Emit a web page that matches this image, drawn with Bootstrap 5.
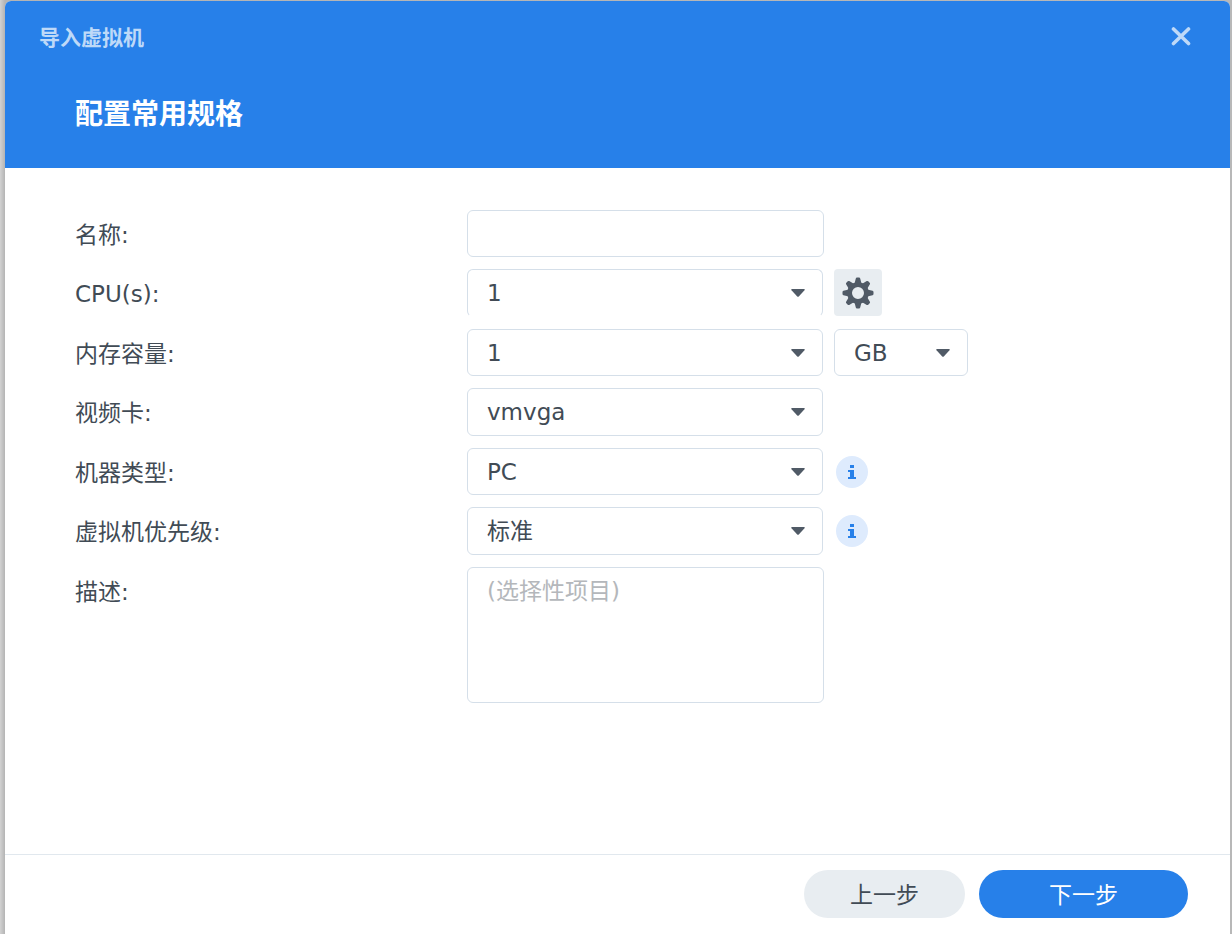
<!DOCTYPE html>
<html lang="zh-CN">
<head>
<meta charset="utf-8">
<meta name="viewport" content="width=device-width, initial-scale=1">
<title>导入虚拟机</title>
<link href="https://cdn.jsdelivr.net/npm/bootstrap@5.3.0/dist/css/bootstrap.min.css" rel="stylesheet">
<style>
  body {
    font: 23px/32px "DejaVu Sans", "Noto Sans CJK SC", sans-serif;
    color: #414b55;
    background: linear-gradient(90deg, #d2d2d2, #b4b4b4 5px, #b8b8b8);
    padding: 1px 2px 0 5px;
  }
  .wizard { min-height: calc(100vh - 1px); border-radius: 6px 6px 0 0; overflow: hidden; background: #fff; }
  .wizard-head { background: #2780e9; height: 167px; padding: 19px 33px 0 34px; }
  .wizard-title { font-size: 21px; line-height: 32px; font-weight: 700; color: #bed9f8; padding-top: 2px; }
  .wizard-close { width: 32px; height: 32px; color: #bed9f8; }
  .wizard-step { font-size: 28px; line-height: 40px; font-weight: 700; padding: 41px 36px 0; }
  .wizard-form { padding: 42px 70px; gap: 12px; }
  .field-row { min-height: 48px; gap: 11px; }
  .field-row:nth-child(odd) { min-height: 47px; }
  .field-label { width: 392px; margin-right: -11px; padding-top: 9px; }
  .form-control, .form-select {
    font-size: 23px; line-height: 32px; color: #414b55;
    border: 1px solid #d5dfe9; border-radius: 6px; padding: 6px 19px; width: 356px;
  }
  .form-control { width: 357px; padding-top: 7px; }
  .form-control::placeholder { color: #b4b7bb; opacity: 1; }
  .form-select {
    background-image: url("data:image/svg+xml,%3Csvg xmlns='http://www.w3.org/2000/svg' viewBox='0 0 14 8'%3E%3Cpath d='M1 0h12q1.5 0 .5 1.2L8 7.3q-1 1-2 0L.5 1.2Q-.5 0 1 0z' fill='%23505a66'/%3E%3C/svg%3E");
    background-size: 14px 8px; background-position: right 17px center;
  }
  .unit-select { width: 134px; }
  .cpu-select { border-bottom-color: transparent; }
  .note-box { height: 136px; resize: none; }
  .gear-btn { width: 48px; height: 47px; background: #e8edf1; border-radius: 4px; color: #505a66; }
  .info-btn { width: 32px; height: 32px; margin-left: 2px; background: #deebfd; color: #2780e9; }
  .wizard-foot { border-top: 1px solid #e1e8ee; padding: 15px 42px 16px; gap: 14px; }
  .step-btn { height: 48px; font-size: 23px; line-height: 32px; border: 0; padding: 2px 0 0; }
  .prev-btn { width: 161px; background: #e8edf1; color: #414b55; }
  .next-btn { width: 209px; background: #2780e9; color: #fff; }
</style>
</head>
<body>
<main class="wizard d-flex flex-column">
  <header class="wizard-head text-white">
    <div class="d-flex justify-content-between align-items-start">
      <h1 class="wizard-title mb-0">导入虚拟机</h1>
      <button type="button" class="wizard-close btn border-0 p-0 d-flex align-items-center justify-content-center" aria-label="关闭">
        <svg width="20" height="20" viewBox="0 0 20 20" fill="none" stroke="currentColor" stroke-width="3.600" stroke-linecap="round"><path d="M2.500 3l15 14.500M17.500 3l-15 14.500"/></svg>
      </button>
    </div>
    <h2 class="wizard-step mb-0">配置常用规格</h2>
  </header>

  <form class="wizard-form d-flex flex-column flex-grow-1">
    <div class="field-row d-flex">
      <label class="field-label flex-shrink-0" for="vm-name">名称:</label>
      <input class="form-control" id="vm-name" type="text">
    </div>
    <div class="field-row d-flex">
      <label class="field-label flex-shrink-0" for="vm-cpu">CPU(s):</label>
      <select class="form-select cpu-select" id="vm-cpu"><option>1</option></select>
      <button type="button" class="gear-btn btn border-0 p-0 d-flex align-items-center justify-content-center" aria-label="CPU 设置">
        <svg width="32" height="32" viewBox="-16 -16 32 32" fill="currentColor">
          <defs><path id="tooth" d="M-3.600-9L-2.200-14.600Q-2-15.500-1-15.500H1Q2-15.500 2.200-14.600L3.600-9z"/></defs>
          <path fill-rule="evenodd" d="M0-10.800A10.800 10.800 0 1 1 0 10.800A10.800 10.800 0 1 1 0-10.800zM0-6A6 6 0 1 0 0 6A6 6 0 1 0 0-6z"/>
          <use href="#tooth"/><use href="#tooth" transform="rotate(45)"/><use href="#tooth" transform="rotate(90)"/><use href="#tooth" transform="rotate(135)"/>
          <use href="#tooth" transform="rotate(180)"/><use href="#tooth" transform="rotate(225)"/><use href="#tooth" transform="rotate(270)"/><use href="#tooth" transform="rotate(315)"/>
        </svg>
      </button>
    </div>
    <div class="field-row d-flex">
      <label class="field-label flex-shrink-0" for="vm-memory">内存容量:</label>
      <select class="form-select" id="vm-memory"><option>1</option></select>
      <select class="form-select unit-select" aria-label="内存单位"><option>GB</option></select>
    </div>
    <div class="field-row d-flex">
      <label class="field-label flex-shrink-0" for="vm-video">视频卡:</label>
      <select class="form-select" id="vm-video"><option>vmvga</option></select>
    </div>
    <div class="field-row d-flex">
      <label class="field-label flex-shrink-0" for="vm-machine">机器类型:</label>
      <select class="form-select" id="vm-machine"><option>PC</option></select>
      <button type="button" class="info-btn btn border-0 rounded-circle p-0 d-flex align-items-center justify-content-center align-self-center" aria-label="机器类型说明">
        <svg width="8" height="14" viewBox="0 0 8 14" fill="currentColor"><path d="M2 0h4v3H2zM0 5h6v7h2v2H0v-2h2V7H0z"/></svg>
      </button>
    </div>
    <div class="field-row d-flex">
      <label class="field-label flex-shrink-0" for="vm-priority">虚拟机优先级:</label>
      <select class="form-select" id="vm-priority"><option>标准</option></select>
      <button type="button" class="info-btn btn border-0 rounded-circle p-0 d-flex align-items-center justify-content-center align-self-center" aria-label="优先级说明">
        <svg width="8" height="14" viewBox="0 0 8 14" fill="currentColor"><path d="M2 0h4v3H2zM0 5h6v7h2v2H0v-2h2V7H0z"/></svg>
      </button>
    </div>
    <div class="field-row d-flex">
      <label class="field-label flex-shrink-0" for="vm-note">描述:</label>
      <textarea class="form-control note-box" id="vm-note" placeholder="(选择性项目)"></textarea>
    </div>
  </form>

  <footer class="wizard-foot d-flex justify-content-end">
    <button type="button" class="step-btn prev-btn btn rounded-pill">上一步</button>
    <button type="button" class="step-btn next-btn btn rounded-pill">下一步</button>
  </footer>
</main>
<script src="https://cdn.jsdelivr.net/npm/bootstrap@5.3.0/dist/js/bootstrap.bundle.min.js"></script>
</body>
</html>
